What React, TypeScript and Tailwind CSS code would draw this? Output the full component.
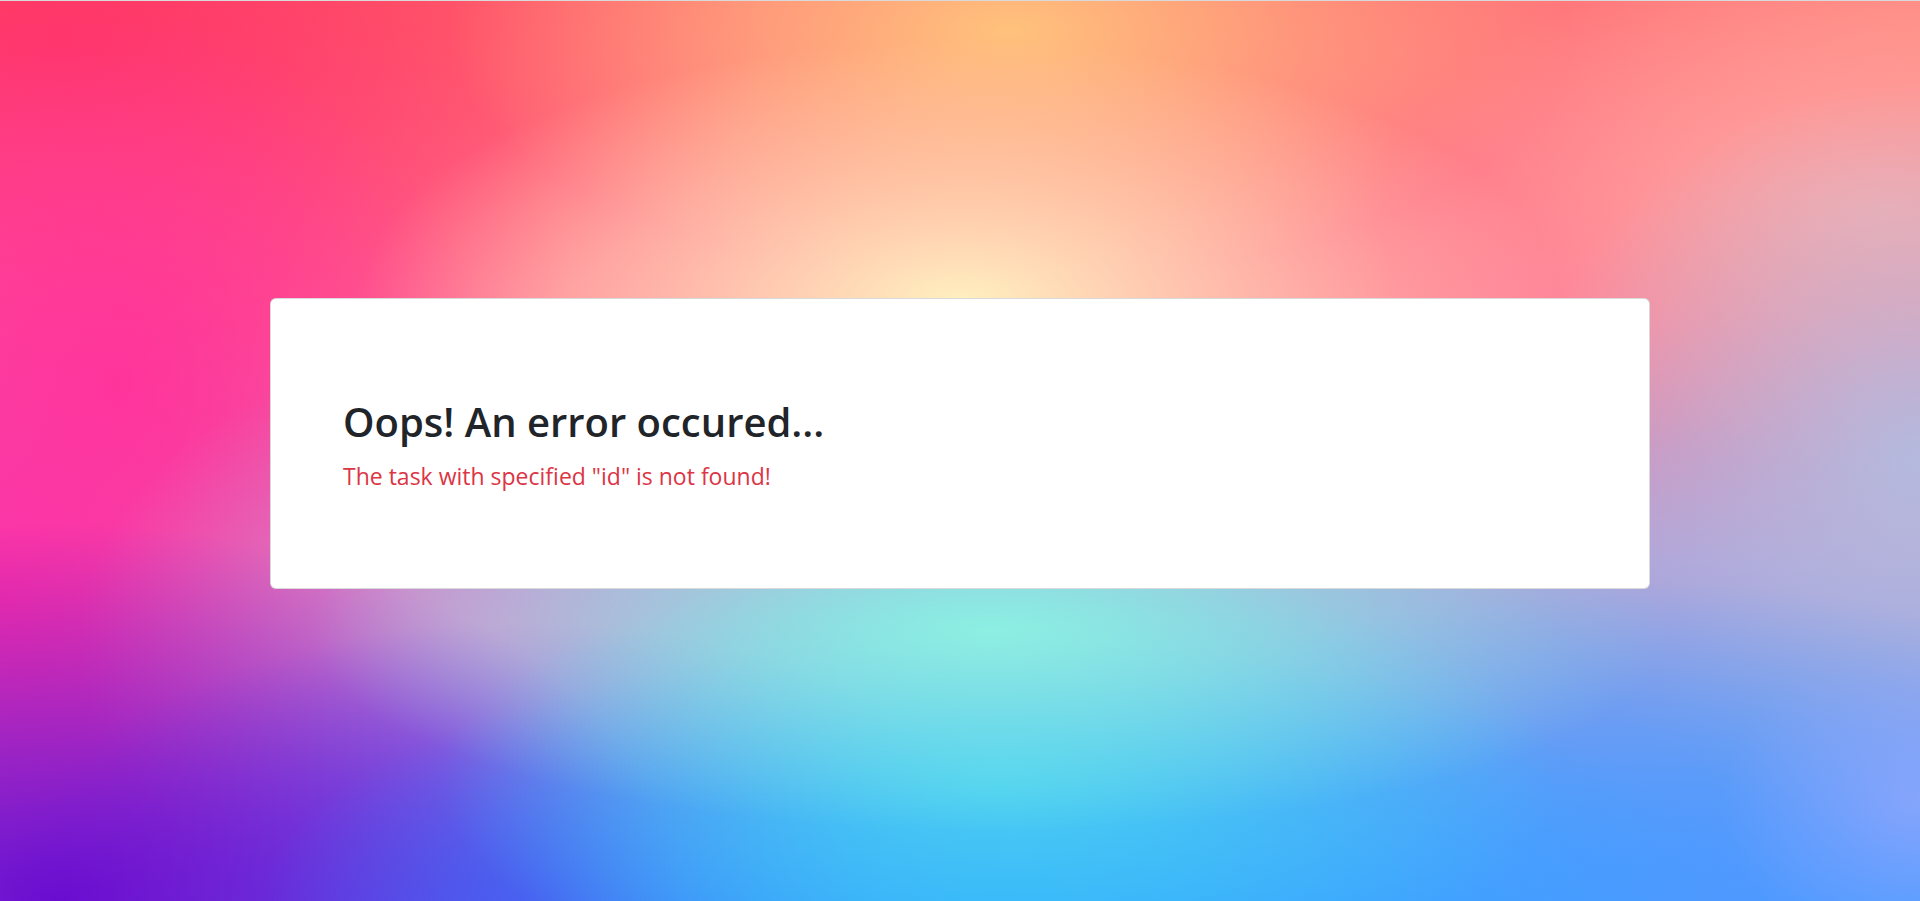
export default function App() {
  return (
    <div
      className="flex min-h-screen items-center border-t border-[#d9d9d9] pb-[16px] font-['Open_Sans',sans-serif] bg-[radial-gradient(680px_200px_at_990px_630px,#8cf0e2_0%,#8cf0e200_100%),radial-gradient(560px_220px_at_1000px_780px,#48cff2_0%,#48cff200_100%),radial-gradient(600px_260px_at_960px_300px,#fff0bf_0%,#fff0bf00_100%),radial-gradient(560px_250px_at_1010px_30px,#ffc27c_0%,#ffc27c00_100%),radial-gradient(200px_160px_at_1920px_800px,#98a8ffaa_0%,#98a8ff00_100%),radial-gradient(740px_260px_at_1000px_901px,#2eaaff_0%,#2eaaff00_100%),radial-gradient(640px_320px_at_1650px_901px,#4f98ff_0%,#4f98ff00_100%),radial-gradient(620px_380px_at_60px_901px,#6a0cd0_0%,#6a0cd000_100%),radial-gradient(520px_280px_at_520px_901px,#5048f0_0%,#5048f000_100%),radial-gradient(420px_300px_at_500px_640px,#d090d0_0%,#d090d000_100%),radial-gradient(400px_380px_at_1920px_460px,#b4bade_0%,#b4bade00_100%),radial-gradient(500px_260px_at_1880px_210px,#ffaaa8_0%,#ffaaa800_100%),radial-gradient(620px_320px_at_1920px_30px,#ff8a80_0%,#ff8a8000_100%),radial-gradient(560px_620px_at_0px_600px,#ff30a6_0%,#ff30a600_100%),radial-gradient(460px_520px_at_120px_380px,#ff3a8c_0%,#ff3a8c00_100%),radial-gradient(700px_360px_at_60px_40px,#ff3354_0%,#ff335400_100%),linear-gradient(180deg,#ff6a78_0%,#ff7a95_35%,#b0a0d8_62%,#4aa0ff_100%)]"
    >
      <div className="mx-auto w-[1380px] rounded-md border border-black/15 bg-white px-[72px] pt-[99px] pb-[95px]">
        <h1 className="mb-[13px] text-[40px] leading-[48px] font-semibold text-[#212529]">
          Oops! An error occured...
        </h1>
        <p className="text-[23px] leading-[34px] text-[#dc3545]">
          The task with specified "id" is not found!
        </p>
      </div>
    </div>
  );
}
